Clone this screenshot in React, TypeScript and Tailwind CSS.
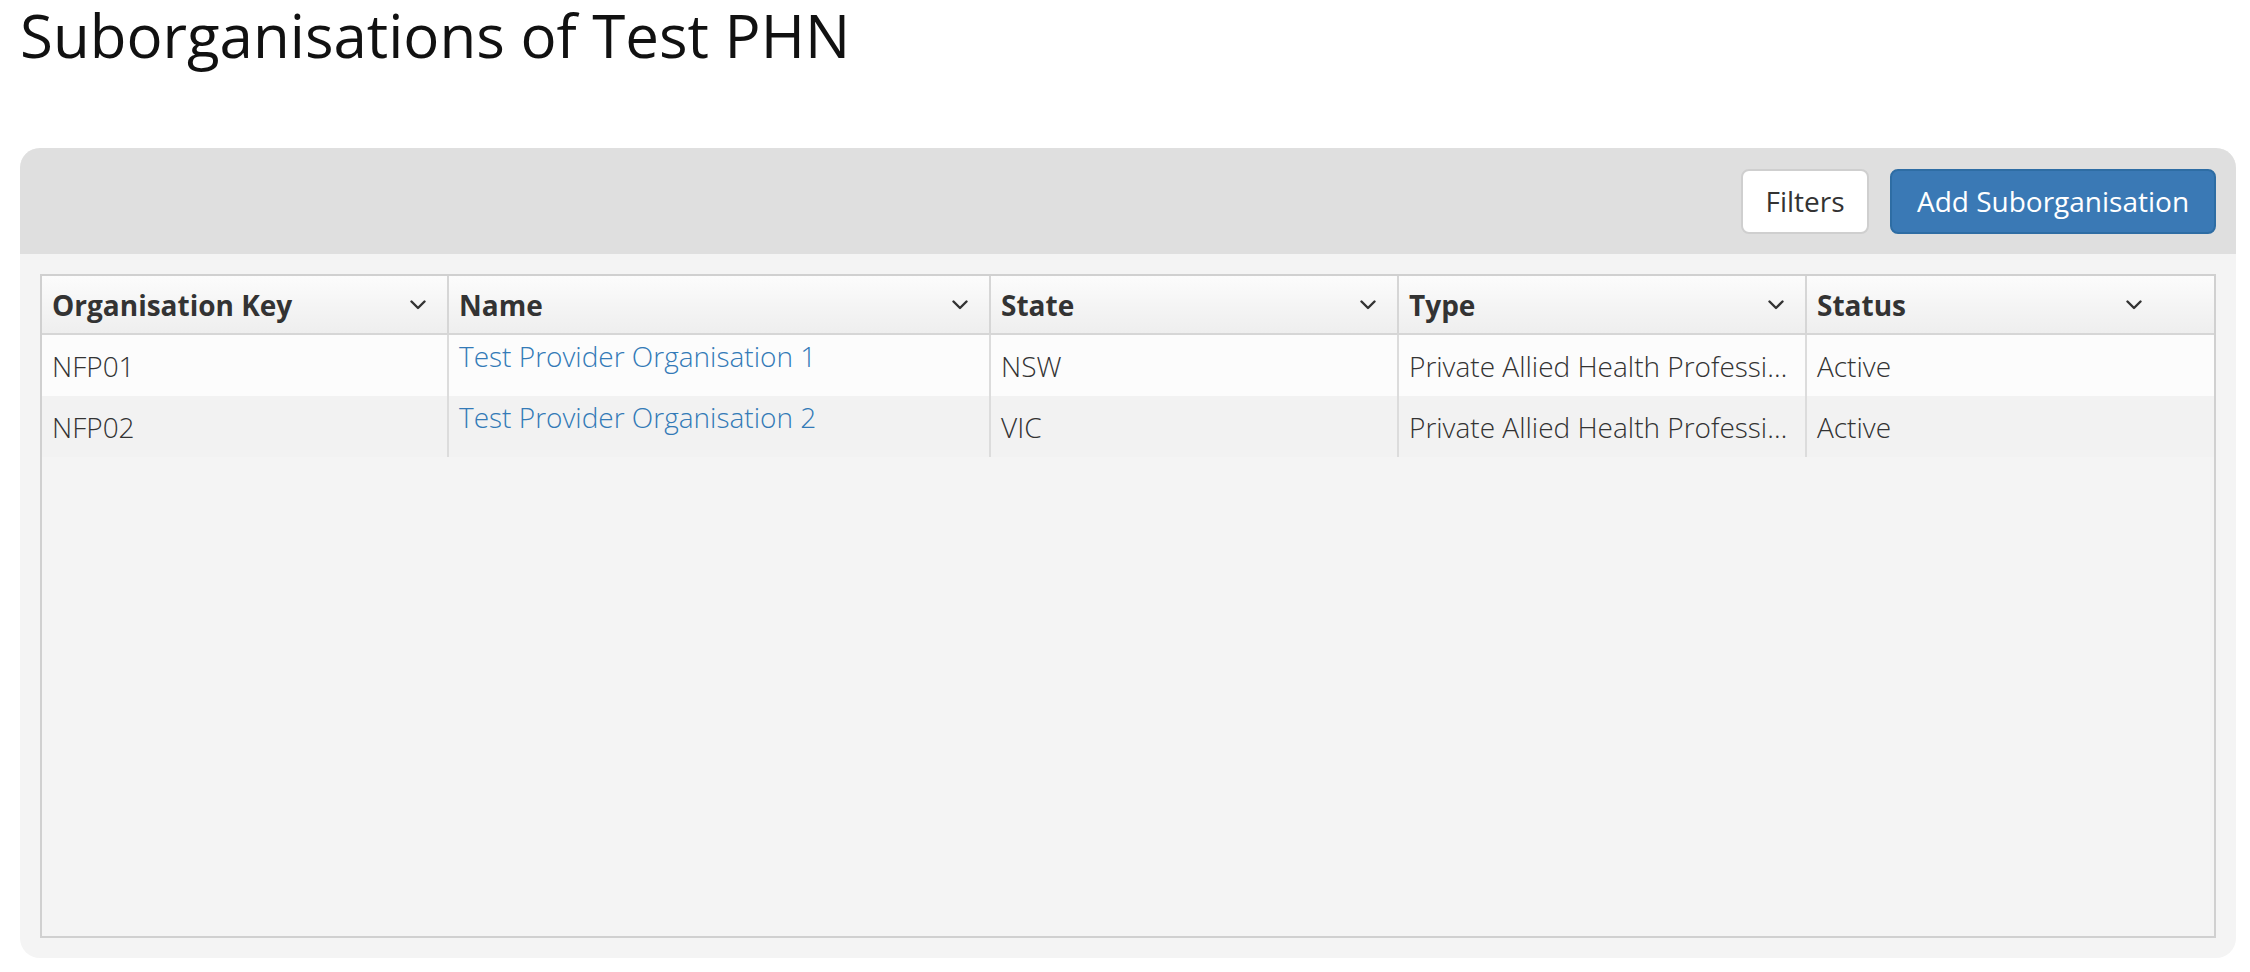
import React from 'react'

type Col = { key: string; label: string; width: string; chevronPad: string }

const columns: Col[] = [
  { key: 'orgKey', label: 'Organisation Key', width: 'w-[407px]', chevronPad: 'pr-[21px]' },
  { key: 'name', label: 'Name', width: 'w-[542px]', chevronPad: 'pr-[21px]' },
  { key: 'state', label: 'State', width: 'w-[408px]', chevronPad: 'pr-[21px]' },
  { key: 'type', label: 'Type', width: 'w-[408px]', chevronPad: 'pr-[21px]' },
  { key: 'status', label: 'Status', width: 'flex-1', chevronPad: 'pr-[72px]' },
]

const rows = [
  { orgKey: 'NFP01', name: 'Test Provider Organisation 1', state: 'NSW', type: 'Private Allied Health Professional', status: 'Active' },
  { orgKey: 'NFP02', name: 'Test Provider Organisation 2', state: 'VIC', type: 'Private Allied Health Professional', status: 'Active' },
]

function Chevron() {
  return (
    <svg width="16" height="10" viewBox="0 0 16 10" className="shrink-0">
      <polyline points="1.5,1.5 8,8 14.5,1.5" fill="none" stroke="#333" strokeWidth="2.4" strokeLinecap="round" strokeLinejoin="round" />
    </svg>
  )
}

export default function App() {
  return (
    <div className="w-full h-[972px] bg-white text-[#333]" style={{ fontFamily: '"Open Sans", "Liberation Sans", sans-serif' }}>
      {/* Title */}
      <h1 className="pl-5 text-[60px] leading-[70px] font-normal text-[#111] mb-[78px]">Suborganisations of Test PHN</h1>

      {/* Panel */}
      <div className="ml-5 mr-[14px] h-[810px] rounded-[20px] bg-[#f4f4f4] overflow-hidden flex flex-col">
        <div className="h-[106px] bg-[#dfdfdf] flex items-center justify-end gap-[21px] pr-5">
          <button className="h-[65px] w-[128px] bg-white border-2 border-[#cfcfcf] rounded-[8px] text-[28px] text-[#333]">
            Filters
          </button>
          <button className="h-[65px] w-[326px] bg-[#3a79b5] border-2 border-[#2e6da4] rounded-[8px] text-[28px] text-white">
            Add Suborganisation
          </button>
        </div>

        <div className="flex-1 p-5 flex flex-col">
          <div className="flex-1 border-2 border-[#d0d0d0] bg-[#f4f4f4] flex flex-col">
            {/* Header */}
            <div className="flex h-[59px] border-b-2 border-[#d6d6d6] bg-gradient-to-b from-[#fcfcfc] to-[#eeeeee]">
              {columns.map((c, i) => (
                <div
                  key={c.key}
                  className={`${c.width} ${i < columns.length - 1 ? 'border-r-2 border-[#d6d6d6]' : ''} ${c.chevronPad} pl-[10px] flex items-center justify-between`}
                >
                  <span className="text-[28px] font-bold text-[#333]">{c.label}</span>
                  <Chevron />
                </div>
              ))}
            </div>

            {/* Rows */}
            {rows.map((r, ri) => (
              <div key={r.orgKey} className={`flex h-[61px] font-light text-[28px] ${ri % 2 === 0 ? 'bg-[#fcfcfc]' : 'bg-[#f2f2f2]'}`}>
                <div className="w-[407px] border-r-2 border-[#dcdcdc] pl-[10px] flex items-center">{r.orgKey}</div>
                <div className="w-[542px] border-r-2 border-[#dcdcdc] pl-[10px] text-[#337ab7] leading-normal">{r.name}</div>
                <div className="w-[408px] border-r-2 border-[#dcdcdc] pl-[10px] flex items-center">{r.state}</div>
                <div className="w-[408px] border-r-2 border-[#dcdcdc] pl-[10px] pr-[14px] flex items-center min-w-0">
                  <span className="truncate">{r.type}</span>
                </div>
                <div className="flex-1 pl-[10px] flex items-center">{r.status}</div>
              </div>
            ))}
          </div>
        </div>
      </div>
    </div>
  )
}
